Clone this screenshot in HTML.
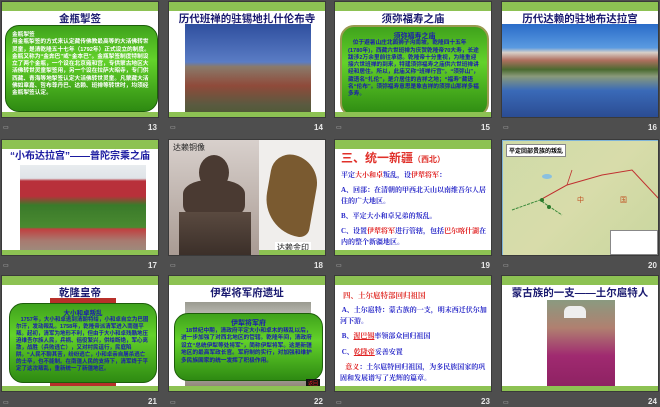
<!DOCTYPE html><html><head><meta charset="utf-8"><style>
*{margin:0;padding:0;box-sizing:border-box}
body{width:660px;height:407px;background:#4e4e4e;position:relative;overflow:hidden;font-family:"Liberation Sans","Noto Sans CJK SC",sans-serif}
.s{position:absolute;width:158px;height:117px;background:#fff;overflow:hidden;border:1px solid #3a3a3a}
.bar{position:absolute;left:0;top:0;width:100%;height:9px;background:#8dc253}
.bb{position:absolute;left:0;bottom:0;width:100%;height:5px;background:#8dc253}
.t{position:absolute;left:0;width:100%;text-align:center;color:#1a1a70;font-weight:bold;font-size:10.5px;line-height:12px;top:11px;white-space:nowrap}
.n{position:absolute;color:#e8e8e8;font-size:8px;font-weight:bold}
.ic{position:absolute;color:#bbb;font-size:6px}
.g{position:absolute;border-radius:14px;background:linear-gradient(#3fa21c,#63d22a 40%,#2e8a12);border:1px solid #1d5e0a;font-size:5.5px;line-height:7.3px;padding:6px 6px;font-weight:bold}
.p{position:absolute}
.tx{position:absolute;font-size:7.5px;line-height:11px;font-family:"Liberation Serif","Noto Serif CJK SC",serif;color:#2727c8;font-weight:bold}
</style></head><body>
<!-- row1 -->
<div class="s" style="left:1px;top:1px"><div class="bar"></div><div class="t">金瓶掣签</div>
<div class="p" style="left:49px;top:95px;width:65px;height:22px;border:1px solid #555;background:#fff"></div>
<div class="g" style="left:3px;top:23px;width:153px;height:87px;color:#fff;font-size:5.7px">金瓶掣签<br>用金瓶掣签的方式来认定藏传佛教最高等的大活佛转世灵童，是清乾隆五十七年（1792年）正式设立的制度。金瓶又称为“金奔巴”或“金本巴”。金瓶掣签制度特制设立了两个金瓶，一个设在北京雍和宫，专供蒙古地区大活佛转世灵童掣签用，另一个设在拉萨大昭寺，专门供西藏、青海等地掣签认定大活佛转世灵童。凡蒙藏大活佛如章嘉、哲布尊丹巴、达赖、班禅等转世时，均须经金瓶掣签认定。</div><div class="bb"></div></div>
<div class="ic" style="left:3px;top:124px">▭</div><div class="n" style="left:148px;top:123px">13</div>

<div class="s" style="left:168px;top:1px"><div class="bar"></div><div class="t">历代班禅的驻锡地扎什伦布寺</div>
<div class="p" style="left:16px;top:22px;width:126px;height:95px;background:linear-gradient(#2f4f9e,#5a7cc4 40%,#8a7a6a 45%,#8f4a3a 65%,#5a5a40 85%,#4a5a30)"></div><div class="bb"></div></div>
<div class="ic" style="left:170px;top:124px">▭</div><div class="n" style="left:314px;top:123px">14</div>

<div class="s" style="left:334px;top:1px"><div class="bar"></div><div class="t">须弥福寿之庙</div>
<div class="g" style="left:5px;top:23px;width:149px;height:92px;color:#1a1ab0;font-size:5.7px;border:2px solid #9a9a50"><div style="text-align:center;font-size:7px">须弥福寿之庙</div>&nbsp;&nbsp;&nbsp;位于避暑山庄北面狮子沟南坡。乾隆四十五年(1780年)，西藏六世班禅为庆贺乾隆帝70大寿，长途跋涉2万余里前往承德。乾隆帝十分重视，为隆重迎接六世班禅的到来，特建须弥福寿之庙供六世班禅讲经和居住。所以，此庙又称“班禅行宫”。“须弥山”，藏语名“扎伦”，是介居住的吉祥之地；“福寿”藏语名“伦布”。须弥福寿意思是象吉祥的须弥山那样多福多寿。</div><div class="bb"></div></div>
<div class="ic" style="left:336px;top:124px">▭</div><div class="n" style="left:481px;top:123px">15</div>

<div class="s" style="left:501px;top:1px"><div class="bar"></div><div class="t">历代达赖的驻地布达拉宫</div>
<div class="p" style="left:0;top:22px;width:158px;height:95px;background:linear-gradient(#2a6cc8,#5a9ae0 25%,#d8d0c8 30%,#b07060 38%,#4a6a30 48%,#8a9a7a 55%,#3a6ab8 70%,#2a4a90)"></div></div>
<div class="ic" style="left:503px;top:124px">▭</div><div class="n" style="left:648px;top:123px">16</div>

<!-- row2 -->
<div class="s" style="left:1px;top:139px"><div class="bar"></div><div class="t" style="font-size:10px;color:#1a1aa0">“小布达拉宫”——普陀宗乘之庙</div>
<div class="p" style="left:18px;top:25px;width:126px;height:89px;background:linear-gradient(#e8ecef,#dfe4e8 15%,#b8303a 18%,#b8303a 35%,#3a7a2a 45%,#4a8a30 70%,#c04040 72%,#a87a70 85%,#9a9080)"></div><div class="bb"></div></div>
<div class="ic" style="left:3px;top:262px">▭</div><div class="n" style="left:148px;top:261px">17</div>

<div class="s" style="left:168px;top:139px;background:#b0a8a2"><div class="p" style="left:0;top:0;width:90px;height:117px;background:linear-gradient(#d8d0cc,#a89a92)"></div>
<div class="p" style="left:30px;top:15px;width:30px;height:35px;background:#4a3a32;border-radius:50%"></div>
<div class="p" style="left:14px;top:40px;width:62px;height:35px;background:#4a3a32;border-radius:40% 40% 10px 10px"></div>
<div class="p" style="left:10px;top:72px;width:72px;height:45px;background:linear-gradient(#5a4a40,#3a2e28)"></div>
<div class="p" style="left:90px;top:0;width:68px;height:117px;background:#f0eeec"></div>
<div class="p" style="left:98px;top:15px;width:48px;height:80px;background:#7a5a30;border-radius:20px 30px 10px 40px;transform:rotate(10deg)"></div>
<div style="position:absolute;left:4px;top:2px;font-size:8px;color:#222">达赖铜像</div>
<div style="position:absolute;left:106px;top:102px;font-size:8px;color:#222;background:#fff;padding:0 2px">达赖金印</div><div class="bb" style="left:90px;width:68px"></div></div>
<div class="ic" style="left:170px;top:262px">▭</div><div class="n" style="left:314px;top:261px">18</div>

<div class="s" style="left:334px;top:139px"><div class="bar"></div>
<div style="position:absolute;left:6px;top:11px;color:#e0302a;font-size:12px;font-weight:bold;line-height:14px">三、统一新疆<span style="font-size:8px">（西北）</span></div>
<div class="tx" style="left:6px;top:30px;width:150px;font-size:7px;line-height:11px">平定<span style="color:#e02020">大小和卓</span>叛乱，设<span style="color:#e02020">伊犁将军</span>：<div style="height:4px"></div>A、回部：在清朝的甲西北天山以南维吾尔人居住的广大地区。<div style="height:4px"></div>B、平定大小和卓兄弟的叛乱。<div style="height:4px"></div>C、设置<span style="color:#e02020">伊犁将军</span>进行管辖，包括<span style="color:#e02020">巴尔喀什湖</span>在内的整个新疆地区。</div><div class="bb"></div></div>
<div class="ic" style="left:336px;top:262px">▭</div><div class="n" style="left:481px;top:261px">19</div>

<div class="s" style="left:501px;top:139px;background:#7fb4d8"><div class="p" style="left:1px;top:1px;width:157px;height:115px;background:linear-gradient(135deg,#cfdba8,#d8dcaa 50%,#c8d69e)"></div>
<div style="position:absolute;left:4px;top:4px;font-size:6px;background:#fff;border:1px solid #888;padding:1px 2px;font-weight:bold">平定回部贵族的叛乱</div>
<div class="p" style="left:40px;top:34px;width:10px;height:5px;background:#8ac0e0;border-radius:50%"></div>
<svg style="position:absolute;left:0;top:0" width="158" height="117"><polyline points="38,60 65,45 100,35 130,30 158,60" fill="none" stroke="#c03030" stroke-width="1"/><polyline points="38,60 65,45 70,30" fill="none" stroke="#c03030" stroke-width="0.8"/><polyline points="10,70 38,60 45,65 60,75" fill="none" stroke="#3a8a3a" stroke-width="1" stroke-dasharray="3,1"/><circle cx="40" cy="60" r="2" fill="#2a7a2a"/><circle cx="47" cy="67" r="2" fill="#2a7a2a"/><text x="75" y="62" font-size="7" fill="#c05020">中</text><text x="118" y="62" font-size="7" fill="#c05020">国</text></svg>
<div class="p" style="left:108px;top:90px;width:48px;height:25px;background:#fff;border:1px solid #888"></div></div>
<div class="ic" style="left:503px;top:262px">▭</div><div class="n" style="left:648px;top:261px">20</div>

<!-- row3 -->
<div class="s" style="left:1px;top:275px"><div class="bar"></div><div class="t">乾隆皇帝</div>
<div class="p" style="left:48px;top:22px;width:66px;height:93px;background:#b8302a"></div>
<div class="g" style="left:7px;top:27px;width:148px;height:80px;color:#1a1ab0;font-size:5.5px;line-height:7px"><div style="text-align:center;font-size:6.5px">大小和卓叛乱</div>&nbsp;&nbsp;&nbsp;1757年，大小和卓逃到清朝特给，小和卓自立为巴图尔汗，发动叛乱。1758年，乾隆帝派清军进入南疆平叛。起初，清军为地形不利，但由于大小和卓残酷地压迫维吾尔族人民，兵祸、徭役繁兴，供给断绝，军心离散，战胜（兵败逃亡），又对村民逞行，民庭陷阱。“人民不聊其苦，纷纷逃亡，小和卓亲自屠杀逃亡的士卒，也不能制。在南疆人民的支持下，清军终于平定了这次叛乱，重新统一了新疆地区。</div><div class="bb"></div></div>
<div class="ic" style="left:3px;top:399px">▭</div><div class="n" style="left:148px;top:397px">21</div>

<div class="s" style="left:168px;top:275px"><div class="bar"></div><div class="t">伊犁将军府遗址</div>
<div class="p" style="left:16px;top:26px;width:126px;height:89px;background:linear-gradient(#9a9a90,#c8c8c0 20%,#aaa 80%,#8a7a68)"></div>
<div class="g" style="left:5px;top:37px;width:149px;height:68px;color:#1a1ab0;font-size:5.7px;line-height:7.5px"><div style="text-align:center;font-size:7px">伊犁将军府</div>&nbsp;&nbsp;&nbsp;18世纪中期，清政府平定大小和卓木的叛乱以后，进一步加强了对西北地区的管辖。乾隆年间，清政府设立“总统伊犁等处将军”，简称伊犁将军。这是新疆地区的最高军政长官。军府制的实行，对加强和维护多民族国家的统一发挥了积极作用。</div>
<div style="position:absolute;left:137px;top:103px;background:#111;color:#e02020;font-size:5px;padding:1px 2px">返回</div><div class="bb"></div></div>
<div class="ic" style="left:170px;top:399px">▭</div><div class="n" style="left:314px;top:397px">22</div>

<div class="s" style="left:334px;top:275px"><div class="bar"></div>
<div style="position:absolute;left:8px;top:14px;color:#e0302a;font-size:7.5px;font-weight:bold;font-family:'Liberation Serif','Noto Serif CJK SC',serif">四、土尔扈特部回归祖国</div>
<div class="tx" style="left:5px;top:29px;width:152px;font-size:7px;line-height:10.5px">&nbsp;A、土尔扈特：蒙古族的一支，明末西迁伏尔加河下游。<div style="height:5px"></div>&nbsp;B、<u style="color:#e02020">渥巴锡</u>率领部众回归祖国<div style="height:5px"></div>&nbsp;C、<u style="color:#e02020">乾隆帝</u>妥善安置<div style="height:5px"></div>&nbsp;&nbsp;&nbsp;<span style="color:#e02020">意义</span>：土尔扈特回归祖国，为多民族国家的巩固和发展谱写了光辉的篇章。</div><div class="bb"></div></div>
<div class="ic" style="left:336px;top:399px">▭</div><div class="n" style="left:481px;top:397px">23</div>

<div class="s" style="left:501px;top:275px"><div class="bar"></div><div class="t">蒙古族的一支——土尔扈特人</div>
<div class="p" style="left:45px;top:24px;width:68px;height:93px;background:linear-gradient(#8a9a80,#b08070 30%,#a02a70 60%,#8a2060)"></div>
<div class="p" style="left:62px;top:30px;width:22px;height:12px;background:#eee;border-radius:6px 6px 0 0"></div><div class="bb"></div></div>
<div class="ic" style="left:503px;top:399px">▭</div><div class="n" style="left:648px;top:397px">24</div>
</body></html>
